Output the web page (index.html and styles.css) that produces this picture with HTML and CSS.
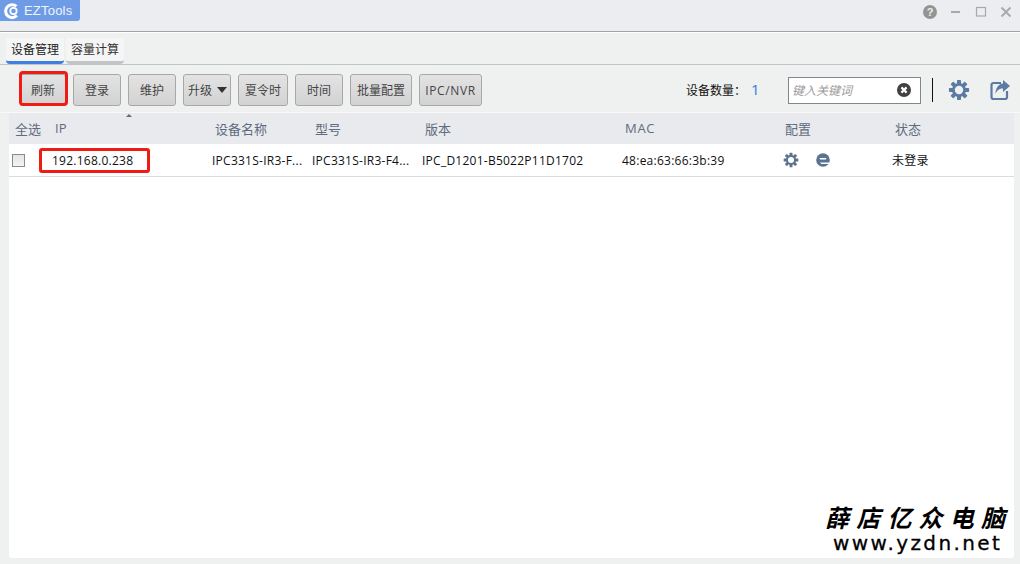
FILE: index.html
```html
<!DOCTYPE html>
<html lang="zh">
<head>
<meta charset="utf-8">
<title>EZTools</title>
<link rel="stylesheet" href="styles.css">
</head>
<body>
<svg class="defs" width="0" height="0">
  <defs>
    <g id="gear">
      <circle cx="12" cy="12" r="7.6" fill="currentColor"/>
      <g fill="currentColor">
        <rect x="9.8" y="1" width="4.4" height="22" rx=".8"/>
        <rect x="9.8" y="1" width="4.4" height="22" rx=".8" transform="rotate(45 12 12)"/>
        <rect x="9.8" y="1" width="4.4" height="22" rx=".8" transform="rotate(90 12 12)"/>
        <rect x="9.8" y="1" width="4.4" height="22" rx=".8" transform="rotate(135 12 12)"/>
      </g>
      <circle cx="12" cy="12" r="4.6" fill="var(--hole)"/>
    </g>
  </defs>
</svg>
<header class="titlebar">
  <div class="brand">
    <svg class="brand-icon" width="18" height="18" viewBox="0 0 18 18">
      <path d="M14.5 3.2A8 8 0 1 0 15 14.6L12.8 12.6A5 5 0 1 1 12.4 5.3Z" fill="#fff"/>
      <circle cx="10.5" cy="9" r="3.2" fill="none" stroke="#fff" stroke-width="1.8"/>
    </svg>
    <span>EZTools</span>
  </div>
  <div class="winctl">
    <svg width="16" height="16" viewBox="0 0 16 16"><circle cx="8" cy="8" r="7" fill="#949494"/><text x="8" y="12" class="help-q">?</text></svg>
    <svg width="12" height="12" viewBox="0 0 12 12"><rect x="1" y="5" width="9" height="2" fill="#a8a8a8"/></svg>
    <svg width="12" height="12" viewBox="0 0 12 12"><rect x="1.5" y="1.5" width="9" height="8.5" fill="none" stroke="#a8a8a8" stroke-width="1.2"/></svg>
    <svg width="12" height="12" viewBox="0 0 12 12"><path d="M1.5 1.5L10.5 10.5M10.5 1.5L1.5 10.5" stroke="#a8a8a8" stroke-width="1.8"/></svg>
  </div>
</header>
<nav class="tabs">
  <div class="tab tab-active">设备管理</div>
  <div class="tab">容量计算</div>
</nav>
<section class="toolbar">
  <button class="btn btn-w46 btn-marked">刷新</button>
  <button class="btn btn-w48">登录</button>
  <button class="btn btn-w48">维护</button>
  <button class="btn btn-w48 btn-drop">升级<i class="caret"></i></button>
  <button class="btn btn-w50">夏令时</button>
  <button class="btn btn-w48">时间</button>
  <button class="btn btn-w62">批量配置</button>
  <button class="btn btn-w63 btn-latin">IPC/NVR</button>
  <div class="tool-right">
    <div class="count">设备数量：<b>1</b></div>
    <div class="search"><span class="placeholder">键入关键词</span>
      <svg width="16" height="16" viewBox="0 0 16 16"><circle cx="8" cy="8" r="7" fill="#404040"/><path d="M5.4 5.4L10.6 10.6M10.6 5.4L5.4 10.6" stroke="#fff" stroke-width="2.2"/></svg>
    </div>
    <div class="sep"></div>
    <svg class="icon-gear" width="22" height="22" viewBox="0 0 24 24"><use href="#gear"/></svg>
    <svg class="icon-share" width="22" height="22" viewBox="0 0 22 22">
      <path d="M12 4H4.5A2 2 0 0 0 2.5 6V18A2 2 0 0 0 4.5 20H16A2 2 0 0 0 18 18V12" fill="none" stroke="currentColor" stroke-width="2.2"/>
      <path d="M14 1L21 7L14 13V9.5C10.5 9.5 8 11 6.5 15C6.5 9.5 9.5 5 14 4.6Z" fill="currentColor"/>
    </svg>
  </div>
</section>
<main class="panel">
  <div class="grid head">
    <div class="cell">全选</div>
    <div class="cell cell-ip">IP<i class="sort"></i></div>
    <div class="cell">设备名称</div>
    <div class="cell">型号</div>
    <div class="cell">版本</div>
    <div class="cell cell-latin">MAC</div>
    <div class="cell">配置</div>
    <div class="cell">状态</div>
  </div>
  <div class="grid row">
    <div class="cell"><span class="check"></span></div>
    <div class="cell cell-ip">192.168.0.238<i class="mark-ip"></i></div>
    <div class="cell">IPC331S-IR3-F...</div>
    <div class="cell">IPC331S-IR3-F4...</div>
    <div class="cell">IPC_D1201-B5022P11D1702</div>
    <div class="cell">48:ea:63:66:3b:39</div>
    <div class="cell cell-icons">
      <svg class="icon-sm" width="16" height="16" viewBox="0 0 24 24"><use href="#gear"/></svg>
      <svg class="icon-sm" width="14" height="14" viewBox="0 0 14 14"><circle cx="7" cy="7" r="6.8" fill="currentColor"/><rect x="3.6" y="4.9" width="6.8" height="1.7" rx=".8" fill="#fff"/><path d="M4 9.4H14V11H5.5Z" fill="#fff"/></svg>
    </div>
    <div class="cell">未登录</div>
  </div>
</main>
<div class="watermark">
  <div class="wm-cn">薛店亿众电脑</div>
  <div class="wm-en">www.yzdn.net</div>
</div>
</body>
</html>
```
FILE: styles.css
```css
* { box-sizing: border-box; }
html, body { margin: 0; height: 100%; }
body {
  position: relative;
  width: 1020px;
  height: 564px;
  overflow: hidden;
  background: #eff0f0;
  font: 12px "Open Sans", "Noto Sans CJK SC", sans-serif;
  color: #222;
}
.defs { position: absolute; }

.titlebar {
  height: 32px;
  display: flex;
  justify-content: space-between;
  align-items: flex-start;
  background: #ebedf0;
  border-bottom: 1px solid #a3a3a3;
}
.brand {
  width: 80px;
  height: 21px;
  display: flex;
  align-items: center;
  gap: 3px;
  padding-left: 3px;
  background: #6e9be6;
  border-radius: 0 0 3px 0;
  color: #f2f5fb;
  font: 13px "Liberation Sans", sans-serif;
  letter-spacing: .2px;
}
.winctl {
  display: flex;
  align-items: center;
  gap: 13px;
  height: 24px;
  padding-right: 8px;
}
.winctl svg:first-child { margin-right: -1px; }
.help-q { font: bold 11px "Liberation Sans", sans-serif; fill: #eee; text-anchor: middle; }

.tabs {
  height: 33px;
  display: flex;
  gap: 2px;
  align-items: flex-end;
  padding-left: 6px;
  border-top: 1px solid #fff;
  border-bottom: 1px solid #c1c5c9;
}
.tab {
  width: 58px;
  height: 26px;
  padding: 3px 0 0 5px;
  background: #f5f5f5;
  border-bottom: 3px solid #c2c5c8;
  border-radius: 0 0 4px 4px;
  color: #333;
  line-height: 18px;
}
.tab-active { border-bottom-color: #3e7fe0; color: #222; }

.toolbar {
  height: 48px;
  display: flex;
  align-items: flex-start;
  gap: 7px;
  padding: 9px 0 0 20px;
  border-bottom: 1px solid #f8f8f8;
}
.btn {
  height: 32px;
  padding: 0;
  border: 1px solid #a8a8a8;
  border-radius: 3px;
  background: linear-gradient(#e3e3e3, #d2d2d2);
  color: #444;
  font: inherit;
}
.btn-w46 { width: 46px; }
.btn-w48 { width: 48px; }
.btn-w50 { width: 50px; }
.btn-w62 { width: 62px; }
.btn-w63 { width: 63px; }
.btn-latin { letter-spacing: .6px; }
.btn-drop { display: flex; align-items: center; justify-content: flex-start; gap: 5px; padding-left: 4px; }
.btn-marked { position: relative; }
.btn-marked::after {
  content: "";
  position: absolute;
  left: -2px;
  right: -3px;
  top: -4px;
  bottom: -1px;
  border: 3px solid #f01c14;
  border-radius: 4px;
}
.caret {
  width: 0;
  height: 0;
  border-left: 5px solid transparent;
  border-right: 5px solid transparent;
  border-top: 6px solid #333;
}
.tool-right {
  margin-left: auto;
  display: flex;
  align-items: center;
  height: 32px;
  padding-right: 9px;
  --hole: #eff0f0;
}
.count { width: 102px; color: #111; line-height: 18px; }
.count b { margin-left: 5px; font-weight: 400; font-size: 15px; color: #2f7fd8; }
.search {
  width: 133px;
  height: 27px;
  display: flex;
  align-items: center;
  justify-content: space-between;
  padding: 0 8px 0 3px;
  background: #fff;
  border: 1px solid #82868f;
}
.placeholder { font-style: italic; color: #9a9a9a; }
.sep { width: 1px; height: 24px; margin: 0 15px 0 11px; background: #111; }
.icon-gear { color: #5b7ba3; margin-right: 19px; }
.icon-share { color: #5b7ba3; }

.panel {
  width: 1005px;
  height: 445px;
  margin-left: 9px;
  background: #fff;
  border-radius: 3px;
  --hole: #fff;
}
.grid {
  display: grid;
  grid-template-columns: 40px 160px 100px 110px 200px 160px 110px 1fr;
  align-items: center;
}
.head { height: 31px; padding-bottom: 1px; background: #e9eaee; color: #5e6c7e; font-size: 13px; }
.head .cell { padding-left: 6px; }
.head .cell-latin { letter-spacing: .7px; }
.row { height: 33px; border-bottom: 1px solid #dcdcdc; color: #111; letter-spacing: .25px; }
.row .cell { padding-left: 3px; white-space: nowrap; }
.cell-ip { position: relative; }
.sort {
  position: absolute;
  left: 77px;
  top: -5px;
  width: 0;
  height: 0;
  border-left: 3px solid transparent;
  border-right: 3px solid transparent;
  border-bottom: 3px solid #5e6c7e;
}
.check {
  display: block;
  width: 13px;
  height: 13px;
  border: 1px solid #8a8a8a;
  background: linear-gradient(#e4e4e4, #f4f4f4);
}
.mark-ip {
  position: absolute;
  left: -10px;
  top: -4px;
  width: 111px;
  height: 25px;
  border: 3px solid #f01c14;
  border-radius: 3px;
}
.cell-icons { display: flex; align-items: center; gap: 17px; padding-left: 4px !important; }
.icon-sm { color: #5b7290; }

.watermark {
  position: absolute;
  left: 825px;
  top: 504px;
  display: flex;
  flex-direction: column;
  gap: 4px;
  color: #000;
}
.wm-cn {
  font: italic 700 24px/26px "Noto Sans CJK SC", sans-serif;
  letter-spacing: 7.2px;
  white-space: nowrap;
}
.wm-en {
  padding-left: 8px;
  font: 400 20px/19px "DejaVu Sans", sans-serif;
  letter-spacing: 2.4px;
  -webkit-text-stroke: .3px #000;
}
```
